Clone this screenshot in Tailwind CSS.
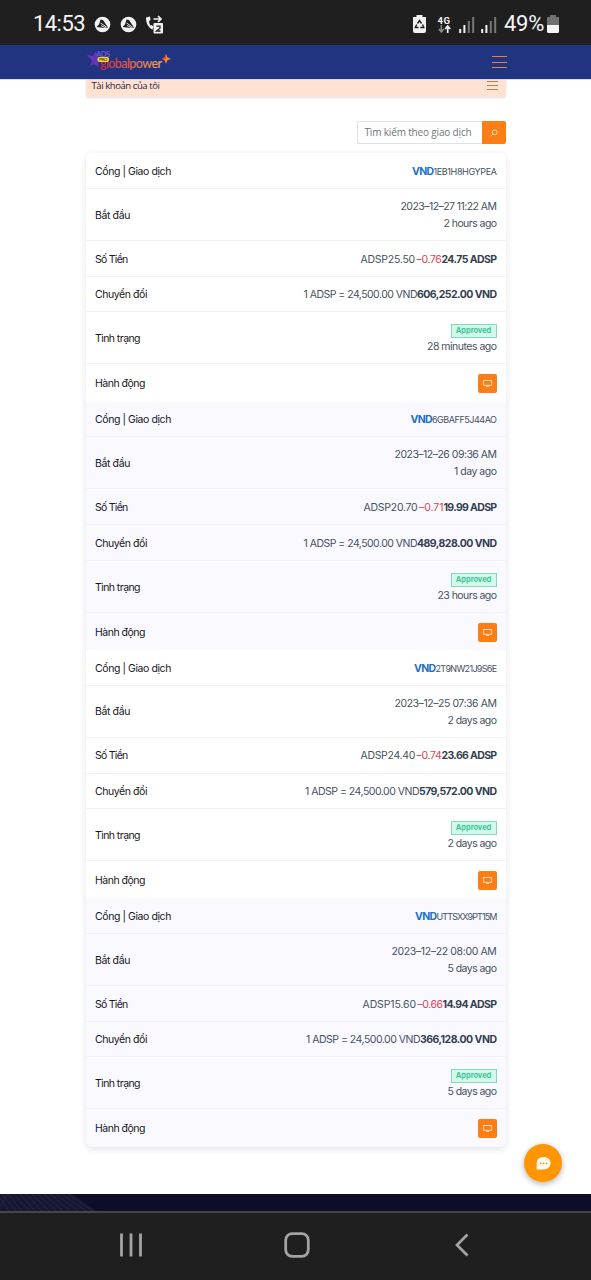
<!DOCTYPE html>
<html lang="vi">
<head>
<meta charset="utf-8">
<title>Global Power</title>
<script src="https://cdn.jsdelivr.net/npm/@tailwindcss/browser@4"></script>
</head>
<body class="bg-white">
<div class="relative flex h-[1280px] w-[591px] flex-col overflow-hidden bg-white font-['Inter',sans-serif]">
  <header class="flex h-[45px] shrink-0 items-center justify-between bg-[#1f1f1f] pt-[3px] pr-[32px] pl-[33px] font-['Roboto',sans-serif] text-[#f4f4f4]">
    <div class="flex items-center">
      <span class="text-[22px] leading-none" data-w="52">14:53</span>
      <svg class="ml-[9px]" width="17" height="17" viewBox="0 0 17 17"><circle cx="8.500" cy="8.500" r="7.800" fill="#f2f2f2"/><path d="M2.500 11 5 8.500 6.500 3.500 9 4l5 7.500-3 .5z" fill="#1f1f1f"/><path d="M6.500 7l6 4M7 9.500l5 2.500" stroke="#f2f2f2" stroke-width=".9"/></svg>
      <svg class="ml-[9px]" width="17" height="17" viewBox="0 0 17 17"><circle cx="8.500" cy="8.500" r="7.800" fill="#f2f2f2"/><path d="M2.500 11 5 8.500 6.500 3.500 9 4l5 7.500-3 .5z" fill="#1f1f1f"/><path d="M6.500 7l6 4M7 9.500l5 2.500" stroke="#f2f2f2" stroke-width=".9"/></svg>
      <svg class="ml-[8px]" width="19" height="19" viewBox="0 0 19 19"><path d="M1 2.500C1 8 3 12.500 7.500 14.500l1-3-2-1.500-1 .7C4.700 9.500 4.200 8 4 6.200L5.500 5 5 1.500z" fill="#f2f2f2"/><path d="M8.500 4h7M13 1l3 3-3 3" fill="none" stroke="#f2f2f2" stroke-width="1.700"/><rect x="8.500" y="8" width="9.500" height="10.500" rx="1" fill="#f2f2f2"/><path d="M11.300 11.200h3.700v2l-3.500 2.800h4" fill="none" stroke="#1f1f1f" stroke-width="1.300"/></svg>
    </div>
    <div class="flex items-center">
      <svg width="13" height="18" viewBox="0 0 13 18"><path d="M3.500 0h6v2H13v14a2 2 0 0 1-2 2H2a2 2 0 0 1-2-2V2h3.500z" fill="#f2f2f2"/><path d="M4.500 8.500 6.500 5.500l2 3M9.500 9.500l1.300 3H7.300M5.500 12.500H2.300l1.400-3" fill="none" stroke="#1f1f1f" stroke-width="1.400"/></svg>
      <div class="ml-[11px] flex w-[14px] flex-col items-center">
        <span class="text-[9.500px] leading-[9px] font-bold" data-w="13">4G</span>
        <svg width="13" height="8" viewBox="0 0 13 8"><path d="M3.300 0v6M.8 4l2.500 3L5.800 4" fill="none" stroke="#8b8b8b" stroke-width="1.500"/><path d="M9.700 8V1.500M7.200 4l2.500-3 2.500 3" fill="none" stroke="#f2f2f2" stroke-width="1.700"/></svg>
      </div>
      <svg class="ml-[8px]" width="16" height="17" viewBox="0 0 16 17"><path d="M1.200 17v-4M5.400 17V9" stroke="#f2f2f2" stroke-width="2"/><path d="M9.800 17V5M14.200 17V1" stroke="#777" stroke-width="2"/></svg>
      <svg class="ml-[6px]" width="16" height="17" viewBox="0 0 16 17"><path d="M1.200 17v-4M5.400 17V9" stroke="#f2f2f2" stroke-width="2"/><path d="M9.800 17V5M14.200 17V1" stroke="#777" stroke-width="2"/></svg>
      <span class="ml-[7px] text-[22px] leading-none" data-w="40">49%</span>
      <svg class="ml-[3px]" width="12" height="18" viewBox="0 0 12 18"><path d="M3 0h6v2h3v8H0V2h3z" fill="#707070"/><path d="M0 10h12v6.500a1.500 1.500 0 0 1-1.500 1.500h-9A1.500 1.500 0 0 1 0 16.500z" fill="#f4f4f4"/></svg>
    </div>
  </header>

  <nav class="flex h-[34px] shrink-0 items-center justify-between bg-[#203480] pr-[84px] pl-[87px]">
    <svg width="85" height="24" viewBox="0 0 85 24" font-family="Lato, sans-serif">
      <defs><linearGradient id="lg" x1="0" x2="1"><stop offset="0" stop-color="#d8203c"/><stop offset=".45" stop-color="#e8603e"/><stop offset="1" stop-color="#f6a65a"/></linearGradient></defs>
      <path d="M0 5l6 1 3-5 1 6 5 1-4 4 1 5-5-3-4 2 2-5z" fill="#6435b5"/>
      <text x="9" y="6.500" font-size="7.500" font-weight="700" fill="#7654df" textLength="14">ADS</text>
      <text x="13" y="18" font-size="12.500" font-weight="500" fill="url(#lg)" textLength="62">globalpower</text>
      <rect x="10.500" y="7" width="11.500" height="5" rx="2" fill="#f6dd35"/>
      <text x="12" y="11.300" font-size="4.500" font-weight="700" fill="#65401d" textLength="8.500">PRO</text>
      <path d="M79 4l1.300 3.300L84 9l-3.700 1.300L79 14l-1.400-3.700L75 9l2.600-1.700z" fill="#ff8a24"/><path d="M75 9l2.600-1.700L79 4v5z" fill="#ed422b"/>
    </svg>
    <svg width="15" height="14" viewBox="0 0 15 14"><path d="M0 1.500h15M0 7.500h15M0 12.500h15" stroke="#e4824a" stroke-width="1.100"/></svg>
  </nav>

  <main class="flex h-[1115px] shrink-0 flex-col items-center border-t border-[#d5daf0]">
    <div class="flex h-[17px] w-[420px] shrink-0 items-start justify-between rounded-b-[2px] bg-[#ffe2d2] pr-[8px] pl-[6px] shadow-sm">
      <span class="font-['Open_Sans',sans-serif] text-[9.500px] leading-[12px] whitespace-nowrap text-[#272744]" data-w="68">Tài khoản của tôi</span>
      <svg class="mt-px" width="11" height="10" viewBox="0 0 11 10"><path d="M0 .5h11M0 4.500h11M0 8.500h11" stroke="#b98052" stroke-width="1"/></svg>
    </div>
    <div class="mt-[24px] flex h-[23px] w-[420px] shrink-0 justify-end">
      <div class="flex w-[125px] items-center rounded-l-[2px] border border-r-0 border-[#dfe1e6] pl-[7px] font-['Open_Sans',sans-serif] text-[10px] text-[#70757c]"><span class="whitespace-nowrap" data-w="107">Tìm kiếm theo giao dịch</span></div>
      <button class="flex w-[24px] items-center justify-center rounded-r-[2px] bg-[#fd7e14]"><svg width="8" height="8" viewBox="0 0 8 8" fill="none" stroke="#ffe5cf" stroke-width=".9"><circle cx="4.700" cy="3.300" r="2.400"/><path d="M3 5 .7 7.300"/></svg></button>
    </div>
    <section id="rows" class="mt-[9.400px] w-[420px] shrink-0 overflow-hidden rounded-[6px] shadow-[0_2px_6px_rgba(40,40,70,0.14)]"></section>
  </main>

  <div class="h-[17px] shrink-0 bg-[#0d0c2b]">
    <svg width="100" height="17" viewBox="0 0 100 17"><path d="M0 0h72l25 17H0z" fill="#171633"/><path d="M2 0l14 17M8 0l14 17M14 0l15 17M20 0l15 17M26 0l16 17M32 0l17 17M38 0l18 17M44 0l19 17M50 0l20 17M56 0l22 17M62 0l24 17M68 0l25 17M0 12L8 0M0 4l9 13" stroke="#29284a" stroke-width=".8" fill="none"/></svg>
  </div>
  <footer class="flex h-[69px] shrink-0 items-center justify-between border-t-2 border-[#45454b] bg-[#1f1f1f] pr-[122px] pb-[3px] pl-[119px]">
    <svg width="24" height="24" viewBox="0 0 24 24"><path d="M2.500.5v23M12 .5v23M21.500.5v23" stroke="#a3a3a3" stroke-width="2.800"/></svg>
    <svg class="-ml-[5px]" width="26" height="26" viewBox="0 0 26 26"><rect x="1.700" y="1.700" width="22.600" height="22.600" rx="6.500" fill="none" stroke="#a3a3a3" stroke-width="2.800"/></svg>
    <svg width="14" height="24" viewBox="0 0 14 24"><path d="M12.500 1.500 2 12l10.500 10.500" fill="none" stroke="#a3a3a3" stroke-width="2.800"/></svg>
  </footer>

  <button class="absolute top-[1144px] left-[524px] flex size-[38px] items-center justify-center rounded-full bg-[#ff9500] shadow-[0_2px_6px_rgba(0,0,0,0.3)]">
    <svg width="15" height="13" viewBox="0 0 15 13"><path d="M7.500 0C11.700 0 14.500 2.500 14.500 6.200s-2.800 6.200-7 6.200H.7V6.200C.7 2.500 3.300 0 7.500 0z" fill="#fff9ee"/><g fill="#ff9500"><circle cx="4.600" cy="6.300" r=".9"/><circle cx="7.600" cy="6.300" r=".9"/><circle cx="10.600" cy="6.300" r=".9"/></g></svg>
  </button>
</div>
<script>
const groups = [
  {id:['1EB1H8HGYPEA',63], date:['2023–12–27 11:22 AM',96], ago:['2 hours ago',53], amt:['ADSP25.50',54.5], fee:['–0.76',25], net:['24.75 ADSP',55], rate:113.5, total:['606,252.00 VND',79.5], upd:['28 minutes ago',69.5]},
  {id:['6GBAFF5J44AO',64.5], date:['2023–12–26 09:36 AM',102], ago:['1 day ago',42.5], amt:['ADSP20.70',54], fee:['–0.71',24.5], net:['19.99 ADSP',53], rate:113.5, total:['489,828.00 VND',79.5], upd:['23 hours ago',59]},
  {id:['2T9NW21J9S6E',61], date:['2023–12–25 07:36 AM',102], ago:['2 days ago',49], amt:['ADSP24.40',54.5], fee:['–0.74',25], net:['23.66 ADSP',55], rate:114, total:['579,572.00 VND',77.5], upd:['2 days ago',49]},
  {id:['UTTSXX9PT15M',60], date:['2023–12–22 08:00 AM',105], ago:['5 days ago',49], amt:['ADSP15.60',53.5], fee:['–0.66',25], net:['14.94 ADSP',54], rate:114, total:['366,128.00 VND',76.5], upd:['5 days ago',49]}
];
const t = ([s, w], c = '') => `<span class="whitespace-nowrap ${c}" data-w="${w}">${s}</span>`;
const row = (label, h, body, last) => `<div class="flex items-center justify-between pt-[1.500px] pr-[9px] pl-[9.500px] ${h} ${last ? '' : 'border-b border-[#f4f1f3]'}">${t(label, 'text-[#17171c]')}${body}</div>`;
document.getElementById('rows').innerHTML = groups.map((g, i) => `<div class="text-[10.500px] leading-[17px] text-[#46515f] ${i % 2 ? 'bg-[#f9f9ff]' : 'bg-white'}">
${row(['Cổng | Giao dịch',76], 'h-[35.500px]', `<div class="flex items-center">${t(['VND',21.5], 'font-bold text-[#1c70ca]')}${t(g.id, 'text-[9px]')}</div>`)}
${row(['Bắt đầu',35], 'h-[52px]', `<div class="flex flex-col items-end">${t(g.date)}${t(g.ago)}</div>`)}
${row(['Số Tiền',32.5], 'h-[36px]', `<div class="flex items-center">${t(g.amt, 'mr-[1.500px]')}${t(g.fee, 'text-[#d94458]')}${t(g.net, 'font-bold text-[#34404f]')}</div>`)}
${row(['Chuyển đổi',52], 'h-[35.600px]', `<div class="flex items-center">${t(['1 ADSP = 24,500.00 VND', g.rate])}${t(g.total, 'font-bold text-[#34404f]')}</div>`)}
${row(['Tình trạng',45], 'h-[52px]', `<div class="flex flex-col items-end pt-[2px]"><div class="flex h-[14px] w-[46px] items-center justify-center border border-[#7fdcbc] bg-[#d5f7eb] text-[7.500px] leading-none font-bold text-[#3bc797]">${t(['Approved',35.5])}</div>${t(g.upd)}</div>`)}
${row(['Hành động',50], 'h-[37.230px]', `<button class="flex size-[19px] items-center justify-center rounded-[2px] bg-[#fd7e14]"><svg width="9" height="7" viewBox="0 0 9 7" fill="none" stroke="#ffd9b8" stroke-width="1"><rect x=".5" y=".5" width="8" height="4.800"/><path d="M3 6.500h3"/></svg></button>`, true)}
</div>`).join('');
function fit() {
  document.querySelectorAll('[data-w]').forEach(e => {
    e.style.letterSpacing = '0px';
    const r = document.createRange();
    r.selectNodeContents(e);
    e.style.letterSpacing = (e.dataset.w - r.getBoundingClientRect().width) / e.textContent.length + 'px';
  });
}
fit();
addEventListener('load', () => { fit(); requestAnimationFrame(fit); setTimeout(fit, 60); });
document.fonts.ready.then(fit);
</script>
</body>
</html>
